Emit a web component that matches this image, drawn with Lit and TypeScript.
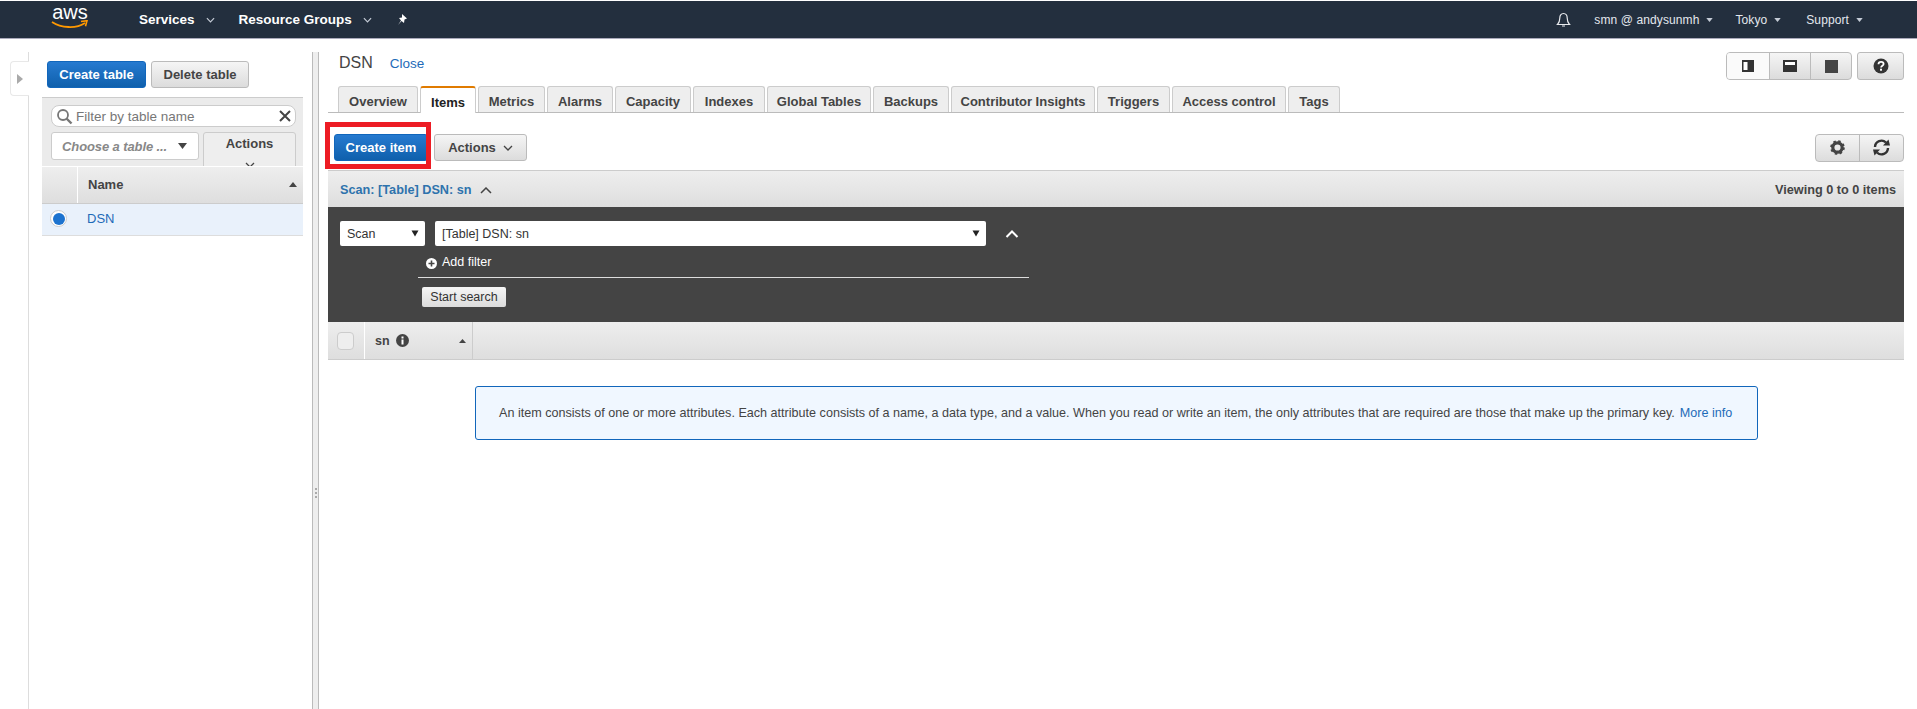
import { LitElement, html, css } from "lit";
import { customElement } from "lit/decorators.js";

const chev = (c = "#444", w = 10) => html`<svg class="chev" width="${w}" height="6" viewBox="0 0 10 6"><path d="M1 1l4 4 4-4" fill="none" stroke="${c}" stroke-width="1.3"/></svg>`;
const caret = html`<svg class="caret" width="7" height="4" viewBox="0 0 8 5"><path d="M0 0h8L4 5z" fill="#c5ccd6"/></svg>`;
const blackCaret = html`<svg class="bc" width="8" height="7" viewBox="0 0 8 7"><path d="M0.5 0.5h7L4 6.5z" fill="#222"/></svg>`;
const TABS: [string, number][] = [["Overview",80],["Items",56],["Metrics",67],["Alarms",66],["Capacity",76],["Indexes",72],["Global Tables",104],["Backups",76],["Contributor Insights",144],["Triggers",73],["Access control",114],["Tags",52]];

@customElement("app-root")
export class AppRoot extends LitElement {
  static styles = css`
    :host { display:block; width:100%; height:709px; background:#fff; overflow:hidden; font-family:"Liberation Sans",Arial,sans-serif; font-size:13px; color:#444; position:relative; }
    * { box-sizing:border-box; }
    .nav { margin-top:1px; height:38px; background:#232f3e; border-bottom:1px solid #aab; display:flex; align-items:center; color:#fff; font-weight:700; font-size:13.5px; padding-left:51px; }
    .logo { width:38px; height:26px; display:flex; flex-direction:column; align-items:center; margin-right:50px; margin-top:-5px; }
    .logo span { font-weight:400; font-size:20px; line-height:17px; }
    .logo svg { margin-top:-1px; }
    .navitem { display:flex; align-items:center; gap:11px; margin-right:24px; }
    .pin { margin-left:0; }
    .spacer { flex:1; }
    .right { display:flex; align-items:center; font-weight:400; font-size:12px; color:#e4e8ee; padding-right:54px; }
    .right .r { display:flex; align-items:center; gap:7px; margin-left:22px; letter-spacing:.1px; }
    .right .r.sup { margin-left:25px; }
    .right svg.bell { margin-right:1px; }
    .main { display:flex; height:670px; }
    .rail { width:29px; margin-top:13px; border-right:1px solid #ddd; position:relative; flex:none; }
    .railtab { position:absolute; left:10px; top:9px; width:19px; height:35px; background:#fff; border:1px solid #e8e8e8; border-right:none; border-radius:4px 0 0 4px; display:flex; align-items:center; justify-content:center; }
    .left { width:283px; flex:none; padding-top:22px; }
    .left-btns { display:flex; gap:5px; padding-left:18px; height:27px; }
    .btn { height:27px; border-radius:3px; border:1px solid #bbb; background:linear-gradient(#f5f5f5,#dcdcdc); display:flex; align-items:center; justify-content:center; font-weight:700; font-size:13px; color:#444; gap:7px; flex:none; }
    .btn.primary { background:linear-gradient(#267ad0,#0f60ac); border-color:#1166bb; color:#fff; }
    .ct { width:99px; } .dt { width:98px; }
    .tool { margin:9px 9px 0 13px; height:69px; border-top:1px solid #ccc; background:#ebebeb; overflow:hidden; padding:7px 7px 0 9px; }
    .filter { height:22px; background:#fff; border:1px solid #ccc; border-radius:8px; display:flex; align-items:center; padding:0 4px 0 4px; gap:3px; color:#777; font-size:13.5px; }
    .filter .t { flex:1; }
    .tool-row { display:flex; gap:4px; margin-top:5px; }
    .choose { width:148px; height:28px; background:#fff; border:1px solid #ccc; border-radius:3px; display:flex; align-items:center; justify-content:space-between; padding:0 11px 0 10px; font-style:italic; font-weight:700; color:#888; font-size:13px; letter-spacing:-.1px; }
    .choose svg { flex:none; }
    .lact { width:93px; height:44px; background:#eee; border:1px solid #ccc; border-radius:3px; display:flex; flex-direction:column; align-items:center; padding-top:3px; font-weight:700; font-size:13px; gap:11px; }
    .lth { margin:0 9px 0 13px; height:38px; display:flex; background:linear-gradient(#eeeeee,#dedede); border-bottom:1px solid #ccc; border-top:1px solid #fff; font-weight:700; }
    .lth .c0 { width:36px; border-right:1px solid #fff; }
    .lth .c1 { flex:1; display:flex; align-items:center; justify-content:space-between; padding:0 6px 2px 10px; }
    .lrow { margin:0 9px 0 13px; height:32px; background:#e9f1fb; border-bottom:1px solid #ddd; display:flex; align-items:center; padding:0 0 2px 8px; color:#1e6bb8; font-size:13px; }
    .radio { width:17px; height:17px; border-radius:50%; background:#fff; border:1px solid #ccc; display:flex; align-items:center; justify-content:center; margin-right:20px; }
    .radio i { width:12px; height:12px; border-radius:50%; background:#1d73cf; display:block; }
    .split { width:7px; flex:none; margin-top:13px; background:#eee; border-left:1px solid #bbb; border-right:1px solid #bbb; display:flex; flex-direction:column; align-items:center; justify-content:center; gap:2px; padding-top:224px; }
    .split i { width:2px; height:2px; background:#aaa; display:block; }
    .pane { flex:1; padding:13px 13px 0 9px; min-width:0; position:relative; }
    .title { height:35px; display:flex; align-items:flex-start; padding-left:11px; }
    .title .d { font-size:16px; margin-top:2px; }
    .title a { color:#1e6bb8; font-size:13.5px; margin:4px 0 0 17px; }
    .title .sp { flex:1; }
    .seg { display:flex; height:28px; border:1px solid #bbb; border-radius:4px; overflow:hidden; margin-right:5px; background:linear-gradient(#f5f5f5,#dcdcdc); }
    .seg div { display:flex; align-items:center; justify-content:center; border-left:1px solid #bbb; }
    .seg div:first-child { border-left:none; }
    .seg .a { background:#fafafa; }
    .w41 { width:42px; } .w41b { width:41px; }
    .help { width:47px; height:28px; padding:0; }
    .tabs { display:flex; height:26px; border-bottom:1px solid #bbb; padding-left:10px; gap:2px; align-items:flex-end; }
    .tab { height:26px; display:flex; align-items:center; justify-content:center; background:#eee; border:1px solid #ccc; border-bottom:none; border-radius:3px 3px 0 0; font-weight:700; font-size:13px; color:#444; padding-top:3px; white-space:nowrap; flex:none; }
    .tab.on { background:#fff; color:#222; border-top:2px solid #e07b00; height:27px; margin-bottom:-1px; }
    .bar { display:flex; align-items:center; height:57px; padding:12px 0 0 6px; gap:6px; }
    .bar .sp { flex:1; }
    .ci { width:94px; }
    .ac { width:93px; }
    .seg.seg2 { height:28px; width:89px; margin-right:0; }
    .seg2 div { flex:1; }
    .band { height:37px; border-top:1px solid #ccc; background:linear-gradient(#eeeeee,#dedede); display:flex; align-items:center; padding:2px 8px 0 12px; font-weight:700; justify-content:space-between; font-size:12.7px; }
    .band .s { color:#2e73ad; display:flex; align-items:center; gap:8px; font-size:12.7px; }
    .dark { height:115px; background:#444; padding-top:14px; }
    .row1 { display:flex; padding-left:12px; align-items:center; }
    .sel { height:25px; background:#fff; border-radius:2px; display:flex; align-items:center; justify-content:space-between; padding:0 6px 0 7px; font-size:12.5px; color:#333; }
    .s1 { width:85px; margin-right:10px; }
    .s2 { width:551px; margin-right:19px; }
    .add { margin:9px 0 0 90px; padding-left:8px; width:611px; height:23px; border-bottom:1px solid #ddd; color:#fff; display:flex; align-items:flex-start; gap:5px; font-size:12.5px; font-weight:400; }
    .add svg { margin-top:3px; }
    .start { margin:9px 0 0 94px; width:84px; height:20px; background:linear-gradient(#f5f5f5,#dcdcdc); border-radius:2px; color:#333; display:flex; align-items:center; justify-content:center; font-size:12.5px; }
    .th { height:38px; display:flex; background:linear-gradient(#eeeeee,#dedede); border-bottom:1px solid #ccc; font-weight:700; font-size:12.5px; }
    .th .c0 { width:37px; border-right:1px solid #fff; display:flex; align-items:center; padding-left:9px; }
    .cb { width:17px; height:18px; border:1px solid #ccc; border-radius:4px; background:#eee; }
    .th .c1 { width:108px; border-right:1px solid #ccc; display:flex; align-items:center; padding:0 6px 0 10px; gap:6px; }
    .th .c1 .g { flex:1; }
    .info { margin:26px 146px 0 147px; height:54px; border:1px solid #1166bb; border-radius:3px; background:#f0f7ff; display:flex; align-items:center; padding-left:23px; font-size:12.6px; color:#444; white-space:nowrap; }
    .info a { color:#1e6bb8; margin-left:5px; }
    .red { position:absolute; left:6px; top:83px; width:106px; height:47px; border:5px solid #ed1c24; pointer-events:none; }
  `;
  render() {
    return html`
      <div class="nav">
        <div class="logo"><span>aws</span><svg width="38" height="10" viewBox="0 0 38 10"><path d="M1 2c9 6 24 7 33 1" fill="none" stroke="#f90" stroke-width="1.8"/><path d="M30 1.500l6-.8-1.500 5.500" fill="none" stroke="#f90" stroke-width="1.6"/></svg></div>
        <div class="navitem">Services ${chev("#c5ccd6", 9)}</div>
        <div class="navitem">Resource Groups ${chev("#c5ccd6", 9)}</div>
        <svg class="pin" width="12" height="12" viewBox="0 0 12 12"><path d="M6 0l5 4.500-2.500 1-.5 3.500L5.500 7 2 11l3-4.500L3 4l3-.5z" fill="#fff"/></svg>
        <div class="spacer"></div>
        <div class="right">
          <svg class="bell" width="15" height="16" viewBox="0 0 15 16"><path d="M7.500 1.500c-2.600 0-3.700 2-3.700 4.500 0 3-.8 5-2.300 6.500h12C12 11 11.200 9 11.200 6c0-2.500-1.100-4.500-3.700-4.500zM6 14h3" fill="none" stroke="#e8eaee" stroke-width="1.2"/></svg>
          <div class="r">smn @ andysunmh ${caret}</div>
          <div class="r">Tokyo ${caret}</div>
          <div class="r sup">Support ${caret}</div>
        </div>
      </div>
      <div class="main">
        <div class="rail"><div class="railtab"><svg width="6" height="10" viewBox="0 0 6 10"><path d="M0 0l6 5-6 5z" fill="#aaa"/></svg></div></div>
        <div class="left">
          <div class="left-btns"><div class="btn primary ct">Create table</div><div class="btn dt">Delete table</div></div>
          <div class="tool">
            <div class="filter">
              <svg width="17" height="17" viewBox="0 0 17 17"><circle cx="7" cy="7" r="5" fill="none" stroke="#777" stroke-width="1.8"/><path d="M10.500 10.500l5 5" stroke="#777" stroke-width="2.4"/></svg>
              <span class="t">Filter by table name</span>
              <svg width="12" height="12" viewBox="0 0 12 12"><path d="M1 1l10 10M11 1L1 11" stroke="#444" stroke-width="2"/></svg>
            </div>
            <div class="tool-row">
              <div class="choose"><span>Choose a table ...</span><svg width="9" height="6" viewBox="0 0 9 6"><path d="M0 0h9L4.500 6z" fill="#444"/></svg></div>
              <div class="lact">Actions ${chev()}</div>
            </div>
          </div>
          <div class="lth"><div class="c0"></div><div class="c1">Name <svg width="8" height="5" viewBox="0 0 8 5"><path d="M0 5h8L4 0z" fill="#444"/></svg></div></div>
          <div class="lrow"><span class="radio"><i></i></span>DSN</div>
        </div>
        <div class="split"><i></i><i></i><i></i></div>
        <div class="pane">
          <div class="title">
            <span class="d">DSN</span><a>Close</a><span class="sp"></span>
            <div class="seg">
              <div class="a w41"><svg width="12" height="12" viewBox="0 0 12 12"><rect width="12" height="12" fill="#333"/><rect x="1.500" y="2" width="4" height="8" fill="#fff"/></svg></div>
              <div class="w41b"><svg width="14" height="12" viewBox="0 0 14 12"><rect width="14" height="12" fill="#333"/><rect x="2" y="2" width="10" height="3" fill="#fff"/></svg></div>
              <div class="w41b"><svg width="13" height="13" viewBox="0 0 13 13"><rect width="13" height="13" fill="#444"/></svg></div>
            </div>
            <div class="btn help"><svg width="16" height="16" viewBox="0 0 16 16"><circle cx="8" cy="8" r="7.500" fill="#333"/><path d="M5.500 6.200c0-1.500 1.100-2.300 2.600-2.300s2.500.8 2.500 2.100c0 1.800-2.500 1.700-2.500 3.500" fill="none" stroke="#fff" stroke-width="1.8"/><rect x="7" y="10.700" width="2" height="2" fill="#fff"/></svg></div>
          </div>
          <div class="tabs">${TABS.map(([t, w]) => html`<div class="tab ${t === "Items" ? "on" : ""}" style="width:${w}px">${t}</div>`)}</div>
          <div class="bar">
            <div class="btn primary ci">Create item</div>
            <div class="btn ac">Actions ${chev()}</div>
            <span class="sp"></span>
            <div class="seg seg2">
              <div><svg width="15" height="15" viewBox="0 0 16 16"><circle cx="8" cy="8" r="5" fill="none" stroke="#444" stroke-width="3.4"/><circle cx="8" cy="8" r="6.600" fill="none" stroke="#444" stroke-width="2.4" stroke-dasharray="2.600 2.580"/></svg></div>
              <div><svg width="19" height="17" viewBox="0 0 19 17"><path d="M3 8a6.500 6.500 0 0 1 11-4.500" fill="none" stroke="#333" stroke-width="2.4"/><path d="M11 6.500h7l-1.500-6z" fill="#333"/><path d="M16 9a6.500 6.500 0 0 1-11 4.500" fill="none" stroke="#333" stroke-width="2.4"/><path d="M8 10.500H1l1.500 6z" fill="#333"/></svg></div>
            </div>
          </div>
          <div class="band"><span class="s">Scan: [Table] DSN: sn <svg width="12" height="7" viewBox="0 0 12 7"><path d="M1 6l5-5 5 5" fill="none" stroke="#444" stroke-width="1.5"/></svg></span><span>Viewing 0 to 0 items</span></div>
          <div class="dark">
            <div class="row1">
              <div class="sel s1">Scan ${blackCaret}</div>
              <div class="sel s2">[Table] DSN: sn ${blackCaret}</div>
              <svg width="14" height="8" viewBox="0 0 14 8"><path d="M1.500 7L7 1.500 12.500 7" fill="none" stroke="#fff" stroke-width="2"/></svg>
            </div>
            <div class="add"><svg width="11" height="11" viewBox="0 0 11 11"><circle cx="5.500" cy="5.500" r="5.500" fill="#fff"/><path d="M5.500 2.500v6M2.500 5.500h6" stroke="#444" stroke-width="1.6"/></svg>Add filter</div>
            <div class="start">Start search</div>
          </div>
          <div class="th">
            <div class="c0"><div class="cb"></div></div>
            <div class="c1">sn <svg width="13" height="13" viewBox="0 0 13 13"><circle cx="6.500" cy="6.500" r="6.500" fill="#444"/><rect x="5.500" y="5.500" width="2" height="5" fill="#fff"/><rect x="5.500" y="2.500" width="2" height="2" fill="#fff"/></svg><span class="g"></span><svg width="7" height="4" viewBox="0 0 7 4"><path d="M0 4h7L3.500 0z" fill="#444"/></svg></div>
          </div>
          <div class="info">An item consists of one or more attributes. Each attribute consists of a name, a data type, and a value. When you read or write an item, the only attributes that are required are those that make up the primary key. <a>More info</a></div>
          <div class="red" aria-hidden="true"></div>
        </div>
      </div>
    `;
  }
}
